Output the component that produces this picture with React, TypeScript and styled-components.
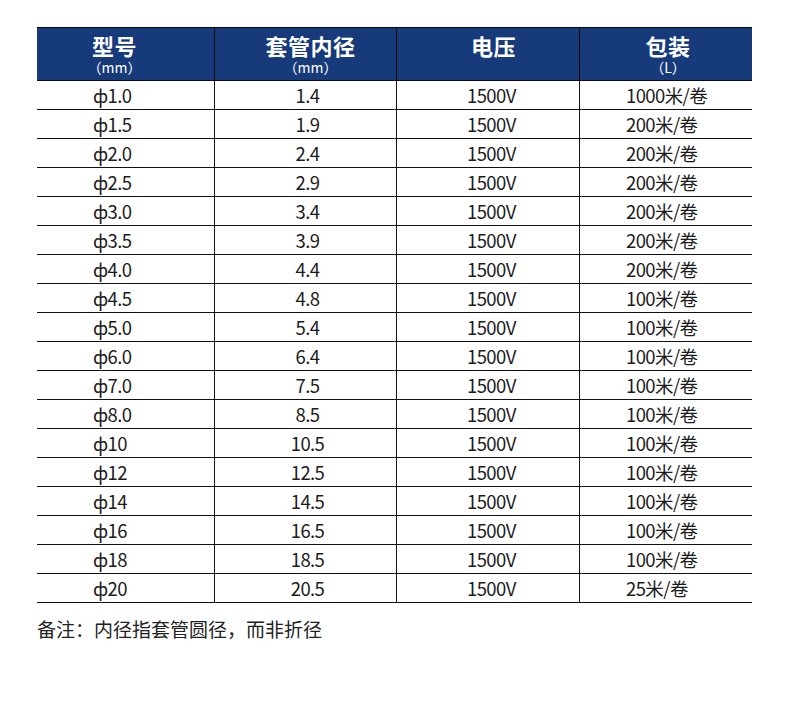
import React from "react";
import styled, { createGlobalStyle } from "styled-components";

const Global = createGlobalStyle`
  html, body { margin: 0; padding: 0; background: #fff; }
  body { font-family: "Noto Sans CJK SC", "Noto Sans", sans-serif; color: #1a1a1a; }
`;

const Page = styled.div`
  width: 790px;
  height: 703px;
  padding: 27px 0 0 37px;
  box-sizing: border-box;
`;

const Table = styled.div`
  width: 715px;
  display: grid;
  grid-template-columns: 178px 182px 183px 172px;
`;

const HeadCell = styled.div<{ $shift: number; $last?: boolean }>`
  height: 52px;
  background: #173a7b;
  border-top: 1px solid #0b0b0b;
  border-bottom: 1px solid #0b0b0b;
  border-right: ${(p) => (p.$last ? "none" : "1px solid #0b0b0b")};
  color: #fff;
  display: flex;
  flex-direction: column;
  align-items: center;
  justify-content: flex-start;
  padding-left: ${(p) => (p.$shift > 0 ? p.$shift : 0)}px;
  padding-right: ${(p) => (p.$shift < 0 ? -p.$shift : 0)}px;
`;

const HeadTitle = styled.div`
  font-size: 22px;
  font-weight: 700;
  line-height: 22px;
  margin-top: 6px;
  letter-spacing: 0.5px;
`;

const HeadSub = styled.div`
  font-size: 14px;
  line-height: 15px;
  margin-top: 4px;
  font-weight: 400;
`;

const Cell = styled.div<{ $align: "left" | "center"; $pad: number; $last?: boolean }>`
  height: 28px;
  border-bottom: 1px solid #111;
  border-right: ${(p) => (p.$last ? "none" : "1px solid #111")};
  display: flex;
  align-items: center;
  justify-content: ${(p) => (p.$align === "left" ? "flex-start" : "center")};
  padding-left: ${(p) => p.$pad}px;
  font-size: 18.5px;
  line-height: 28px;
  color: #1c1c1c;
  letter-spacing: -0.6px;
`;

const Note = styled.div`
  margin-top: 14px;
  font-size: 19px;
  color: #222;
  line-height: 24px;
`;

const rows: [string, string, string, string][] = [
  ["ф1.0", "1.4", "1500V", "1000米/卷"],
  ["ф1.5", "1.9", "1500V", "200米/卷"],
  ["ф2.0", "2.4", "1500V", "200米/卷"],
  ["ф2.5", "2.9", "1500V", "200米/卷"],
  ["ф3.0", "3.4", "1500V", "200米/卷"],
  ["ф3.5", "3.9", "1500V", "200米/卷"],
  ["ф4.0", "4.4", "1500V", "200米/卷"],
  ["ф4.5", "4.8", "1500V", "100米/卷"],
  ["ф5.0", "5.4", "1500V", "100米/卷"],
  ["ф6.0", "6.4", "1500V", "100米/卷"],
  ["ф7.0", "7.5", "1500V", "100米/卷"],
  ["ф8.0", "8.5", "1500V", "100米/卷"],
  ["ф10", "10.5", "1500V", "100米/卷"],
  ["ф12", "12.5", "1500V", "100米/卷"],
  ["ф14", "14.5", "1500V", "100米/卷"],
  ["ф16", "16.5", "1500V", "100米/卷"],
  ["ф18", "18.5", "1500V", "100米/卷"],
  ["ф20", "20.5", "1500V", "25米/卷"],
];

const heads = [
  { t: "型号", s: "（mm）", shift: -22 },
  { t: "套管内径", s: "（mm）", shift: 10 },
  { t: "电压", s: "", shift: 11 },
  { t: "包装", s: "（L）", shift: 4 },
];

export default function App() {
  return (
    <Page>
      <Global />
      <Table>
        {heads.map((h, i) => (
          <HeadCell key={h.t} $shift={h.shift} $last={i === 3}>
            <HeadTitle>{h.t}</HeadTitle>
            {h.s && <HeadSub>{h.s}</HeadSub>}
          </HeadCell>
        ))}
        {rows.map((r) => (
          <React.Fragment key={r[0]}>
            <Cell $align="left" $pad={56}>{r[0]}</Cell>
            <Cell $align="center" $pad={4}>{r[1]}</Cell>
            <Cell $align="left" $pad={70}>{r[2]}</Cell>
            <Cell $align="left" $pad={46} $last>{r[3]}</Cell>
          </React.Fragment>
        ))}
      </Table>
      <Note>备注：内径指套管圆径，而非折径</Note>
    </Page>
  );
}
